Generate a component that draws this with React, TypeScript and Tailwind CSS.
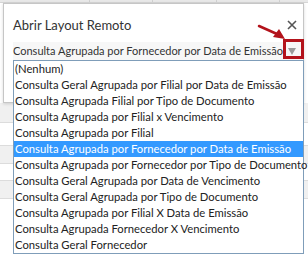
import React from 'react'

const items = [
  '(Nenhum)',
  'Consulta Geral Agrupada por Filial por Data de Emissão',
  'Consulta Agrupada Filial por Tipo de Documento',
  'Consulta Agrupada por Filial x Vencimento',
  'Consulta Agrupada por Filial',
  'Consulta Agrupada por Fornecedor por Data de Emissão',
  'Consulta Agrupada por Fornecedor por Tipo de Documento',
  'Consulta Geral Agrupada por Data de Vencimento',
  'Consulta Geral Agrupada por Tipo de Documento',
  'Consulta Agrupada por Filial X Data de Emissão',
  'Consulta Agrupada Fornecedor X Vencimento',
  'Consulta Geral Fornecedor',
]

const selected = 5

export default function App() {
  return (
    <div
      className="relative w-[308px] h-[260px] overflow-hidden bg-white text-[#333]"
      style={{ fontFamily: 'Lato, "Open Sans", sans-serif' }}
    >
      {/* page behind the dialog */}
      <div className="flex h-[3px] bg-[#e8e8e8] border-b border-[#d6d6d6]">
        <div className="w-[90px] border-r border-[#d0d0d0]" />
        <div className="w-[63px] border-r border-[#d0d0d0]" />
        <div className="w-[64px] border-r border-[#d0d0d0]" />
        <div className="w-[63px] border-r border-[#d0d0d0]" />
      </div>
      <div className="h-[100px]" />
      <div className="flex flex-col">
        <div className="h-[20px] bg-[#f0f0f0] border-b border-[#dcdcdc]" />
        <div className="h-[23px] bg-white border-b border-[#dcdcdc]" />
        <div className="h-[18px] bg-[#f0f0f0] border-b border-[#dcdcdc]" />
        <div className="h-[17px] bg-white border-b border-[#dcdcdc]" />
        <div className="h-[18px] bg-[#f0f0f0] border-b border-[#dcdcdc]" />
      </div>

      {/* dialog */}
      <div className="absolute left-[3px] top-[3px] w-[301px] h-[100px] bg-white border border-[#c6c6c6] shadow-[0_1px_3px_rgba(0,0,0,0.15)]">
        <div className="flex items-center justify-between pl-[9px] pr-[5px] pt-[12px]">
          <span className="text-[13px] leading-[18px] text-[#333]">Abrir Layout Remoto</span>
          <svg width="10" height="10" viewBox="0 0 10 10" className="mr-[1px]">
            <path d="M1 1L9 9M9 1L1 9" stroke="#555" strokeWidth="1.6" />
          </svg>
        </div>
        <div className="mt-[8px] ml-[9px] mr-[1px] h-[18px] flex items-center bg-[#f7f7f7]">
          <span className="text-[11px] leading-[16px] text-[#333] whitespace-nowrap">
            Consulta Agrupada por Fornecedor por Data de Emissão
          </span>
          <svg width="8" height="7" viewBox="0 0 8 7" className="shrink-0 mt-[1px] ml-auto mr-[6px]">
            <path d="M0 0H8L4 7Z" fill="#9a9a9a" />
          </svg>
        </div>
      </div>

      {/* open list */}
      <div className="absolute left-[13px] top-[60px] w-[291px] bg-white border border-[#7f9db9] flex flex-col">
        {items.map((item, i) => (
          <div
            key={item}
            className={`h-[16px] leading-[16px] text-[11.25px] pl-[1px] whitespace-nowrap ${
              i === selected ? 'bg-[#3399ff] text-white' : 'text-[#222]'
            }`}
          >
            {item}
          </div>
        ))}
      </div>

      {/* annotation */}
      <div className="absolute left-[283px] top-[39px] w-[21px] h-[20px] border-[3px] border-[#b3131b]" />
      <svg className="absolute left-0 top-0" width="308" height="260">
        <line x1="259" y1="26" x2="277" y2="34" stroke="#b3131b" strokeWidth="2.5" strokeLinecap="round" />
        <polygon points="285,39 273,37 279,29" fill="#b3131b" />
      </svg>
    </div>
  )
}
